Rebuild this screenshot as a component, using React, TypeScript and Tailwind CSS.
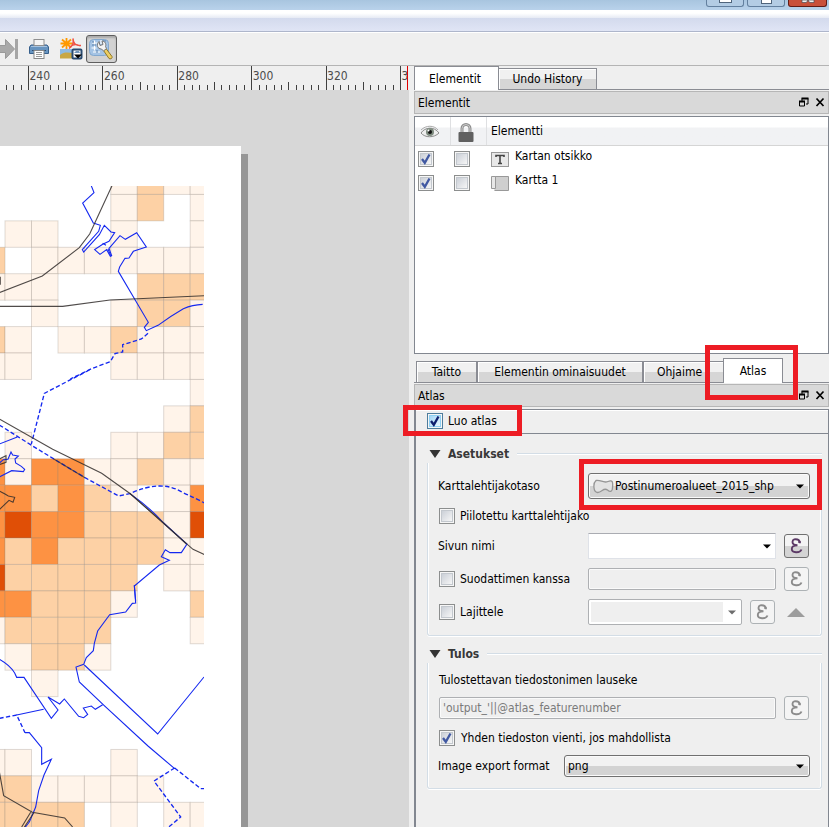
import type { ReactNode } from "react";

const COLS = [-21.4, 5, 31.5, 58, 84.4, 110.8, 137.3, 163.7, 190.2, 216.6];
const ROW_TOP = 168;
const ROW_H = 26.43;
const CELLS = [
  ".....abaa",
  ".....ab.a",
  ".aa..a..a",
  "b.aaaaaaa",
  "aaa...bbb",
  "..a..abba",
  "ba.aabaaa",
  "aa...aaaa",
  "........a",
  ".......ab",
  ".a...aabb",
  "caccaabaa",
  "ccbcba.ac",
  "cdccbbbad",
  "cbcbbbbaa",
  "dbbbbb.aa",
  "ccbbba..b",
  "abbbb...a",
  ".abba....",
  "..a......",
  ".........",
  ".........",
  "aa...a...",
  "bbaaaaa..",
  "bbbb.a.aa",
];
const FILLS: Record<string, string> = { a: "#fff4ea", b: "#fdd1a5", c: "#fd9243", d: "#e04f06" };

function MapView() {
  return (
    <svg className="block" width="409" height="737" viewBox="0 90 409 737">
      <rect x="0" y="90" width="409" height="737" fill="#d7d7d7" />
      <rect x="241" y="154" width="7" height="673" fill="#969696" />
      <rect x="0" y="146" width="241" height="681" fill="#fff" />
      <clipPath id="frame">
        <rect x="0" y="186" width="204" height="641" />
      </clipPath>
      <g clipPath="url(#frame)">
        {CELLS.flatMap((row, r) =>
          row.split("").map((k, c) =>
            k === "." ? null : (
              <rect
                key={`${r}-${c}`}
                x={COLS[c]}
                y={ROW_TOP + r * ROW_H}
                width={COLS[c + 1] - COLS[c]}
                height={ROW_H}
                fill={FILLS[k]}
                stroke="#8c8078"
                strokeOpacity="0.28"
                strokeWidth="1"
              />
            ),
          ),
        )}
        <g transform="translate(0 180) scale(.33333)" fill="none" stroke="#1428f0" strokeWidth="3.3">
          <path d="M273 15l9 23-34 31 32 60 21 7-5 18-49 55 4 7 47-52 15-28 20 20 11 2-17 26-19 9-24 16 16 14 20-14 11 20 4-2-8-22 33-38 16 11 34-20 29 43-39 13-13 20-12 1-16 26-4 13 90 153-12 15 6 10 35-16q36-27 76-50 28-12 58-13" />
          <path d="M308 190l10 6M324 207l8 20" />
          <path d="M444 460l-20 17-56 17v22l-23 5-14 24-54 20-66 32" strokeDasharray="13 7" strokeWidth="4" />
          <g stroke="#302c2a" strokeOpacity=".85">
            <path d="M337 15l-53 115-15 32-31 41-111 85L-2 338" />
            <path d="M-2 379h190l142-19 284-13" />
            <path d="M0 290v24" strokeWidth="5" />
          </g>
        </g>
        <g transform="translate(0 370) scale(.33333)" fill="none" stroke="#1428f0" strokeWidth="3.3">
          <path d="M268 0L133 70 94 222M-2 165l100 63 62 38 95 57 101 55 33-7q95-44 158-4 40 18 68 33" strokeDasharray="13 7" strokeWidth="4" />
          <path d="M-2 222l54-21M-2 321l37-19 35 3 4-7-10-9-17-10-2-12 10-9-17-3-5-9-9 22-14 1-15 13" />
          <path d="M390 371q60 42 101 88l70 63-17 26h-34l-14-9-12 21 24 11-30 14-75 63 4 45" />
          <g stroke="#302c2a" strokeOpacity=".85">
            <path d="M-2 147l160 91 147 72 87 62 95 85 92 81 35 16" />
            <path d="M-2 363l17 9 10 6 19 4-5 15-12-6-29 28" />
            <path d="M160 266l95 57M390 371l101 88 68 63" strokeOpacity=".7" />
            <path d="M-2 267l20-10v20l-20 7" />
          </g>
        </g>
        <g transform="translate(0 590) scale(.33333)" fill="none" stroke="#1428f0" strokeWidth="3.3">
          <path d="M403-15l4 54-10 1-20 26-48 8-36 49-10 37-3 22-21 21-8 20-23 8 10 45 74 70 132 122 80 68" />
          <path d="M253 225l220 207 139-171M-2 208q32 18 46 41l6 13h22l82 123 20-25-30-39 35 21 14-15 43 52 15 4 12-10-13-19 24-6 12 10 22-14" />
          <path d="M50 375l81-17" />
          <path d="M524 534l78 62h12M524 534l-62 39 80 108-36 30M-2 385l52-10 25 53" strokeDasharray="13 7" strokeWidth="4" />
          <path d="M75 428h13l37 45v50l29-15-22 47-16 47-9 49-12 29q-5 18-21 33" />
          <g stroke="#302c2a" strokeOpacity=".85">
            <path d="M-2 545l13 72 86 50 97 17 24 27M92 667l-27 44M101 669l-29 44" />
          </g>
        </g>
      </g>
    </svg>
  );
}

function Ruler() {
  const first = 28.5;
  const step = 7.44;
  const ticks = Array.from({ length: 55 }, (_, i) => i - 3);
  return (
    <svg className="block bg-[#efefef]" width="409" height="24" viewBox="0 66 409 24">
      {ticks.map((i) => {
        const x = Math.floor(first + i * step);
        if (x > 407 || x < 0) return null;
        const top = i % 10 === 0 ? 66 : i % 5 === 0 ? 82 : 85;
        return <rect key={i} x={x} y={top} width="1" height={90 - top} fill="#404040" />;
      })}
      {[240, 260, 280, 300, 320, 340].map((n, i) => (
        <text key={n} x={29.5 + i * 74.4} y="80" fontSize="12" fill="#4c4c4c" fontFamily="DejaVu Sans Condensed, DejaVu Sans, sans-serif" fontStretch="condensed">
          {n}
        </text>
      ))}
      <rect x="408" y="66" width="1" height="24" fill="#efefef" />
      <rect x="407" y="66" width="1" height="24" fill="#e00000" />
    </svg>
  );
}

function Toolbar() {
  return (
    <div className="flex h-[34px] items-center border-t border-b border-t-white border-b-[#b4b4b4] bg-[#efefef]">
      <svg width="18" height="22" viewBox="0 0 18 22" className="shrink-0">
        <path d="M-3 7.500h8.500v-6l9 9.500-9 9.500v-6H-3z" fill="#a9a9a9" stroke="#999" />
        <rect x="15" y="1" width="3" height="20" fill="#a5a5a5" />
      </svg>
      <svg width="22" height="22" viewBox="0 0 22 22" className="ml-[10px] shrink-0">
        <path d="M3 7h16l1.500 2v6.500h-19V9z" fill="#6794c0" stroke="#365f8c" />
        <path d="M3 8.500h16" stroke="#a7c3df" />
        <rect x="6" y="1.500" width="10" height="6" fill="#f5f5f5" stroke="#8f8f8f" />
        <path d="M4 12.500h14" stroke="#2b4e77" />
        <rect x="6" y="12.500" width="10" height="8" fill="#fff" stroke="#888" />
        <path d="M8 14.500h6M8 16.500h6M8 18.500h6" stroke="#999" />
      </svg>
      <svg width="24" height="24" viewBox="0 0 24 24" className="ml-[9px] shrink-0">
        <path d="M7.500 1v11M3 2.500l9 8M3 10.500l9-8M1.500 6.500h12" stroke="#f90" strokeWidth="1.800" />
        <path d="M14 1.500c1 5-1 8-4 10M14 1.500c0 4 2 7.500 8 7M11 10c3-3 7-3 10-1" fill="none" stroke="#ee5145" strokeWidth="1.500" />
        <rect x="1" y="12" width="16" height="9" fill="#8ebbe3" />
        <path d="M1 18c5-4 9-2 14-2v5.500H1z" fill="#c8a744" />
        <rect x="13.500" y="12.500" width="9" height="9" rx="1" fill="#fff" stroke="#284a70" strokeWidth="2" />
        <path d="M15 16h6l-1-2h-3z" fill="#6f94b8" />
        <path d="M15 17.500h8l-4 4z" fill="#000" />
      </svg>
      <div className="ml-[3px] flex h-[28px] w-[31px] shrink-0 items-center justify-center rounded-[3px] border border-[#5e5e5e] bg-[#d2d2d2] shadow-[inset_0_2px_2px_#aaa]">
        <svg width="27" height="25" viewBox="0 0 27 25">
          <rect x="1.500" y="2.500" width="19" height="16" rx="4" fill="#a5c4e5" stroke="#82a8cf" />
          <path d="M4 6h5M6.500 3.500v10M13 3v4M3.500 11h5M5 15h7M10 5l2 4" stroke="#fff" strokeWidth="1.200" />
          <path d="M4 8h4M9 13v3M15 4h3M4 5h2" stroke="#5880ac" />
          <path d="M15.500 13.500l2.500-2 6 8c1 2-2 3-3 2z" fill="#edce62" stroke="#8f7728" />
          <path d="M11 4.500l1 4 3-1-1-3.500c3 0 4.500 3 3.500 5.500l1 2-3 2.500-2-2c-4 0-5.500-4-2.500-7.500z" fill="#f3f3f3" stroke="#777" />
        </svg>
      </div>
    </div>
  );
}

function WindowButtons() {
  return (
    <div className="flex justify-end gap-[3px] pr-[2px]">
      <div className="flex h-[7px] w-[38px] justify-center rounded-b-[3px] border border-t-0 border-[#63809f] bg-[#b3cce4]">
        <div className="h-[3px] w-[13px] border border-t-0 border-[#50657c] bg-white" />
      </div>
      <div className="flex h-[7px] w-[38px] justify-center rounded-b-[3px] border border-t-0 border-[#63809f] bg-[#b3cce4]">
        <div className="h-[4px] w-[11px] border border-t-0 border-[#50657c] bg-white" />
      </div>
      <div className="flex h-[7px] w-[39px] justify-center rounded-b-[3px] border border-t-0 border-[#621b15] bg-[#c9503a]">
        <svg width="14" height="4" viewBox="0 0 14 4">
          <path d="M1 0h5l1 1 1-1h5v2.500H9L7 .8 5 2.500H1z" fill="#eee" stroke="#4e4b55" strokeWidth=".7" />
        </svg>
      </div>
    </div>
  );
}

function DockTitle({ children }: { children: ReactNode }) {
  return (
    <div className="flex h-[23px] items-center border border-[#b6b6b6] bg-[#d9d9d9] pl-[3px]">
      <span className="pt-px">{children}</span>
      <svg className="mr-[2px] ml-auto" width="28" height="11" viewBox="0 0 28 11">
        <path d="M4 4V1.500h6V7H8M1.500 4.500h5v4.500h-5z" fill="none" stroke="#000" />
        <path d="M3.500 1.500h7M1 4.500h6" stroke="#000" strokeWidth="2" />
        <path d="M18.500 1.500l7 7.500M25.500 1.500l-7 7.500" stroke="#000" strokeWidth="1.700" />
      </svg>
    </div>
  );
}

function Check({ on = false, hot = false }: { on?: boolean; hot?: boolean }) {
  return (
    <svg width="16" height="16" viewBox="0 0 16 16" className="shrink-0">
      <defs>
        <linearGradient id="boxFill" x1="0" y1="0" x2="1" y2="1">
          <stop offset="0" stopColor="#c9ced6" />
          <stop offset="1" stopColor="#f8f8f8" />
        </linearGradient>
        <linearGradient id="boxHot" x1="0" y1="0" x2="1" y2="1">
          <stop offset="0" stopColor="#9fd4f5" />
          <stop offset="1" stopColor="#eef9ff" />
        </linearGradient>
      </defs>
      <rect x=".5" y=".5" width="15" height="15" fill="#f6f6f6" stroke={hot ? "#4f7d9c" : "#8c8e8e"} />
      <rect x="2.500" y="2.500" width="11" height="11" fill={hot ? "url(#boxHot)" : "url(#boxFill)"} stroke={hot ? "#8fd0f3" : "#c3c8ce"} />
      {on && <path d="M4 8l2.800 3.800L11.500 3.500" fill="none" stroke={hot ? "#101f6e" : "#4159a2"} strokeWidth="2.300" />}
    </svg>
  );
}

function Epsilon({ on = false }: { on?: boolean }) {
  return (
    <div
      className={
        on
          ? "flex h-6 w-[25px] shrink-0 items-center justify-center rounded-[3px] border border-[#707070] bg-linear-to-b from-[#f4f4f4] from-50% to-[#d4d4d4] to-50%"
          : "flex h-6 w-[25px] shrink-0 items-center justify-center rounded-[3px] border border-[#adb2b5] bg-[#f4f4f4]"
      }
    >
      <svg width="13" height="16" viewBox="0 0 13 16" className="-ml-px">
        <path
          d="M2.500 4C2.500 1 5.500 1 7.500 1.500 9.500 2 10 4 9.500 5M2.500 4c0 2.500 2 3.200 5 3.200C3.500 7.200 1.800 9 1.800 11c0 4 8 4.500 9.700.500"
          fill="none"
          stroke={on ? "#5c3a66" : "#8c8c8c"}
          strokeWidth="1.900"
        />
        <circle cx="9.500" cy="4" r="1.300" fill={on ? "#5c3a66" : "#8c8c8c"} />
      </svg>
    </div>
  );
}

function Arrow({ color = "#000" }: { color?: string }) {
  return (
    <svg width="8" height="5" viewBox="0 0 8 5" className="shrink-0">
      <path d="M0 .5h8l-4 4z" fill={color} />
    </svg>
  );
}

function Group({ title, children }: { title: string; children: ReactNode }) {
  return (
    <section className="ml-[11px] w-[395px]">
      <div className="flex h-[18px] items-center">
        <svg width="12" height="8" viewBox="0 0 12 8" className="ml-[2px] shrink-0">
          <path d="M.5 0h11L6 8z" fill="#333" />
        </svg>
        <h2 className="ml-[7px] font-['DejaVu_Sans'] text-[12px] leading-[18px] font-bold text-[#383838]">{title}</h2>
        <div className="ml-2 h-[2px] flex-1 border-t border-[#d3dde6] bg-white" />
      </div>
      <div className="rounded-b-[3px] border border-t-0 border-[#d3dde6] pr-[11px] pl-[10px] shadow-[inset_1px_0_0_#fff,inset_-1px_0_0_#fff,0_1px_0_#fff]">{children}</div>
    </section>
  );
}

const TAB = "flex items-center justify-center border border-[#8a8c93] bg-linear-to-b from-[#f1f1f1] from-50% to-[#d6d6d6] to-50% shadow-[inset_1px_1px_0_#fff]";

export default function App() {
  return (
    <div className="relative h-[827px] w-[829px] overflow-hidden bg-[#efefef] font-['DejaVu_Sans_Condensed','DejaVu_Sans',sans-serif] text-[12px] leading-4 whitespace-nowrap text-black [font-stretch:condensed]">
      <div className="h-[10px] bg-linear-to-b from-[#a8c5df] to-[#b9d2eb]">
        <WindowButtons />
      </div>
      <div className="h-2 bg-linear-to-b from-white from-40% to-[#e6eaf4]" />
      <div className="h-[14px] border-b border-[#aeb6cb] bg-linear-to-b from-[#d3daed] to-[#e0e5f5]" />
      <Toolbar />
      <div className="flex">
        <div className="w-[409px] shrink-0">
          <Ruler />
          <MapView />
        </div>
        <div className="ml-[5px] flex w-[415px] shrink-0 flex-col">
          <div className="flex h-6 items-end border-b border-[#8a8c93]">
            <div className="-mb-px flex h-6 w-[85px] items-center justify-center border border-b-0 border-[#8a8c93] bg-white pr-[3px]">Elementit</div>
            <div className={`${TAB} -mb-px h-[22px] w-[98px] border-l-0`}>Undo History</div>
          </div>
          <div className="mt-px">
            <DockTitle>Elementit</DockTitle>
          </div>
          <div className="mt-[2px] h-[238px] border border-[#828790] bg-white">
            <div className="flex h-[29px] items-center border-b border-[#d5d5d5] bg-linear-to-b from-white from-35% to-[#f1f2f4] to-40%">
              <div className="flex h-full w-[36px] items-center border-r border-[#dfe0e2] pt-[2px] pl-[5px]">
                <svg width="20" height="14" viewBox="0 0 20 14">
                  <path d="M1 8C5 2 14 1 19 8 14 13 5 13 1 8z" fill="#eee" stroke="#8b8b8b" />
                  <path d="M1 5C6 0 14 0 18 5" fill="none" stroke="#aaa" />
                  <circle cx="10" cy="7" r="4" fill="#7d8a7e" />
                  <circle cx="10" cy="7" r="2" fill="#111" />
                  <circle cx="8.500" cy="5.500" r="1" fill="#fff" />
                </svg>
              </div>
              <div className="flex h-full w-[36px] items-center border-r border-[#dfe0e2] pt-[3px] pl-[7px]">
                <svg width="16" height="19" viewBox="0 0 16 19">
                  <path d="M4 10V5.500a4 4 0 018 0V10" fill="none" stroke="#8d8d8d" strokeWidth="3" />
                  <path d="M4 10V5.500a4 4 0 018 0V10" fill="none" stroke="#ccc" strokeWidth="1" />
                  <rect x=".5" y="9" width="15" height="10" rx="1" fill="#606060" />
                </svg>
              </div>
              <span className="ml-[4px]">Elementti</span>
            </div>
            <div className="flex h-6 items-center pl-[3px]">
              <span className="mt-[2px] flex">
                <Check on />
                <span className="w-5" />
                <Check />
              </span>
              <svg width="18" height="15" viewBox="0 0 18 15" className="mt-[2px] ml-[21px]">
                <rect x=".5" y=".5" width="17" height="14" fill="#e8e8e8" stroke="#999" />
                <path d="M5 5V3.500h8V5M9 3.500v8M7 11.500h4" fill="none" stroke="#444" strokeWidth="1.600" />
              </svg>
              <span className="-mt-[4px] ml-[6px]">Kartan otsikko</span>
            </div>
            <div className="flex h-6 items-center pl-[3px]">
              <span className="mt-[2px] flex">
                <Check on />
                <span className="w-5" />
                <Check />
              </span>
              <svg width="18" height="16" viewBox="0 0 18 16" className="mt-[2px] ml-[21px]">
                <path d="M2.500 1.500h15v14h-14" fill="#cfcfcf" stroke="#999" />
                <path d="M.5 1.500h4v12h-4z" fill="#e8e8e8" stroke="#999" />
              </svg>
              <span className="-mt-[4px] ml-[6px]">Kartta 1</span>
            </div>
          </div>
          <div className="mt-[6px] flex h-[23px] items-end border-b border-[#8a8c93] pl-[2px]">
            <div className={`${TAB} -mb-px h-[22px] w-[61px]`}>Taitto</div>
            <div className={`${TAB} -mb-px h-[22px] w-[166px]`}>Elementin ominaisuudet</div>
            <div className={`${TAB} -mb-px h-[22px] w-[80px] justify-start! border-r-0 pl-[13px]`}>Ohjaime</div>
            <div className="-mb-px flex h-[25px] w-[60px] items-center justify-center border border-b-0 border-[#8a8c93] bg-white">Atlas</div>
          </div>
          <div className="mt-px">
            <DockTitle>Atlas</DockTitle>
          </div>
          <div className="mt-[2px] h-[418px] border-r border-l-2 border-[#828790]">
            <div className="flex h-[25px] items-center border-t border-b border-[#828790] pb-[2px] pl-[11px] shadow-[inset_0_1px_0_#fff]">
              <Check on hot />
              <span className="ml-[5px]">Luo atlas</span>
            </div>
            <div className="h-[11px]" />
            <Group title="Asetukset">
              <div className="flex h-9 items-center pt-[10px]">
                <span className="w-[150px]">Karttalehtijakotaso</span>
                <div className="flex h-[26px] w-[222px] items-center rounded-[3px] border border-[#707070] bg-linear-to-b from-[#f2f2f2] from-50% to-[#d3d3d3] to-50% pr-[5px] pl-[4px] shadow-[inset_0_0_0_1px_#fafafa]">
                  <svg width="21" height="15" viewBox="0 0 21 15">
                    <path d="M3 1.500c5-1 7 3 12 1 5-2 5 1 4.500 6 0 4-2 5-5 2.500-4-3-5 2-10 2.500C0 13 0 4 3 1.500z" fill="#e3e3e3" stroke="#969696" strokeWidth="1.300" />
                  </svg>
                  <span className="mr-auto ml-px">Postinumeroalueet_2015_shp</span>
                  <Arrow />
                </div>
              </div>
              <div className="flex h-[34px] items-center pl-px">
                <Check />
                <span className="ml-[5px]">Piilotettu karttalehtijako</span>
              </div>
              <div className="flex h-[26px] items-center">
                <span className="w-[150px]">Sivun nimi</span>
                <div className="mr-2 flex h-[26px] w-[188px] items-center justify-end border border-[#dfe2e8] border-t-[#aaacb2] bg-white pr-[4px]">
                  <Arrow />
                </div>
                <Epsilon on />
              </div>
              <div className="flex h-10 items-center pl-px">
                <Check />
                <span className="ml-[5px] w-[128px]">Suodattimen kanssa</span>
                <div className="mr-2 h-[22px] w-[188px] rounded-[2px] border border-[#aeb0b3] shadow-[inset_0_0_0_1px_#fafafa]" />
                <Epsilon />
              </div>
              <div className="mb-[10px] flex h-[26px] items-center pl-px">
                <Check />
                <span className="ml-[5px] w-[128px]">Lajittele</span>
                <div className="mr-2 flex h-[26px] w-[154px] items-center rounded-[2px] border border-[#aeb0b3] bg-white p-[2px]">
                  <div className="mr-[5px] h-5 w-[132px] bg-[#efefef]" />
                  <Arrow color="#6d6d6d" />
                </div>
                <Epsilon />
                <svg width="18" height="9" viewBox="0 0 18 9" className="ml-[12px]">
                  <path d="M0 9h18L9 0z" fill="#9d9d9d" />
                </svg>
              </div>
            </Group>
            <div className="h-[9px]" />
            <Group title="Tulos">
              <div className="flex h-[33px] items-center pl-px">Tulostettavan tiedostonimen lauseke</div>
              <div className="flex h-6 items-center pl-px">
                <div className="mr-2 flex h-[22px] w-[337px] items-center rounded-[2px] border border-[#aeb0b3] pl-[3px] text-[#7b7b7b] shadow-[inset_0_0_0_1px_#fafafa]">'output_'||@atlas_featurenumber</div>
                <Epsilon />
              </div>
              <div className="flex h-[35px] items-center pl-px">
                <Check on />
                <span className="ml-[6px]">Yhden tiedoston vienti, jos mahdollista</span>
              </div>
              <div className="mb-[11px] flex h-[22px] items-center">
                <span className="w-[126px]">Image export format</span>
                <div className="flex h-[22px] w-[246px] items-center justify-between rounded-[3px] border border-[#707070] bg-linear-to-b from-[#f2f2f2] from-50% to-[#d3d3d3] to-50% pr-[5px] pl-[3px] shadow-[inset_0_0_0_1px_#fafafa]">
                  png
                  <Arrow />
                </div>
              </div>
            </Group>
          </div>
        </div>
      </div>
      <div className="absolute top-[345px] left-[705px] h-[55px] w-[93px] border-5 border-[#ed1c24]" />
      <div className="absolute top-[405px] left-[403px] h-[31px] w-[119px] border-5 border-[#ed1c24]" />
      <div className="absolute top-[459px] left-[579px] h-[51px] w-[243px] border-5 border-[#ed1c24]" />
    </div>
  );
}
